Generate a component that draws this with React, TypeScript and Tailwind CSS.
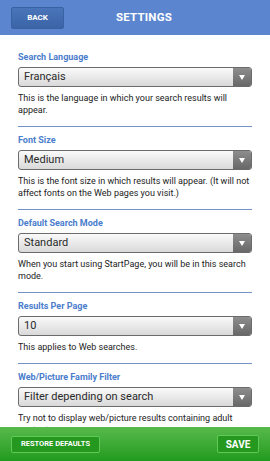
import React from "react";

const sections = [
  {
    label: "Search Language",
    value: "Français",
    desc: "This is the language in which your search results will appear.",
  },
  {
    label: "Font Size",
    value: "Medium",
    desc: "This is the font size in which results will appear. (It will not affect fonts on the Web pages you visit.)",
  },
  {
    label: "Default Search Mode",
    value: "Standard",
    desc: "When you start using StartPage, you will be in this search mode.",
  },
  {
    label: "Results Per Page",
    value: "10",
    desc: "This applies to Web searches.",
  },
  {
    label: "Web/Picture Family Filter",
    value: "Filter depending on search",
    desc: "Try not to display web/picture results containing adult content.",
  },
];

function Select({ value }: { value: string }) {
  return (
    <div className="mt-1 flex h-[20px] rounded-[3px] border border-[#6b6b6b] bg-gradient-to-b from-[#fafafa] to-[#d9d9d9] overflow-hidden">
      <div className="flex-1 pl-[5px] text-[11px] leading-[18px] text-[#2a2a2a]">
        {value}
      </div>
      <div className="flex w-[18px] items-center justify-center bg-gradient-to-b from-[#8d8d8d] to-[#686868]">
        <svg width="6" height="5" viewBox="0 0 6 5">
          <path d="M0 0 L6 0 L3 5 Z" fill="#fff" />
        </svg>
      </div>
    </div>
  );
}

export default function App() {
  return (
    <div
      className="flex h-[461px] w-[270px] flex-col bg-white"
      style={{ fontFamily: "Roboto, 'Liberation Sans', sans-serif" }}
    >
      <header className="flex h-[35px] shrink-0 items-center bg-[#5b86cf] px-[11px]">
        <button className="h-[22px] w-[53px] rounded-[2px] border border-[#3a62a3] bg-gradient-to-b from-[#4a75ba] to-[#3a64a6] text-[8px] font-bold text-white">
          BACK
        </button>
        <h1 className="ml-[52px] text-[11.5px] font-bold tracking-[0.2px] text-white">
          SETTINGS
        </h1>
      </header>

      <main className="flex-1 overflow-hidden px-[18px] pt-[16px]">
        {sections.map((s, i) => (
          <section key={s.label} className={i > 0 ? "pt-[7px]" : ""}>
            <div className="text-[9px] font-bold leading-[12px] text-[#4a7dcc]">
              {s.label}
            </div>
            <Select value={s.value} />
            <p className="mt-[5px] text-[9px] leading-[12px] text-[#222]">
              {s.desc}
            </p>
            <div className="mt-[10px] h-px bg-[#7392c6]" />
          </section>
        ))}
      </main>

      <footer className="flex h-[34px] shrink-0 items-center justify-between bg-gradient-to-b from-[#56ba4b] to-[#1f9a1d] px-[11px]">
        <button className="h-[17px] w-[89px] rounded-[2px] border border-[#5fca57] bg-[#25981f] text-[7.5px] font-bold text-white">
          RESTORE DEFAULTS
        </button>
        <button className="h-[18px] w-[42px] rounded-[2px] border border-[#5fca57] bg-[#25981f] text-[10px] font-bold text-white">
          SAVE
        </button>
      </footer>
    </div>
  );
}
